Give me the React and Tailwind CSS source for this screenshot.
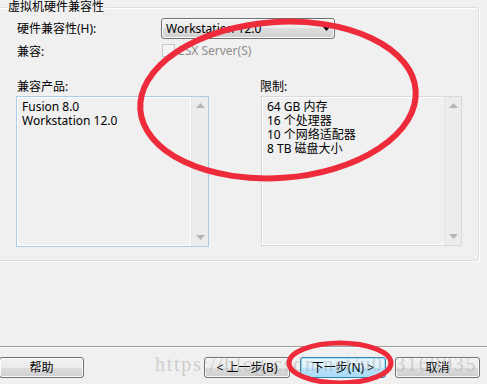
import React from "react";

const font = { fontFamily: '"Noto Sans", "Noto Sans CJK SC", sans-serif' };

function ScrollBar() {
  return (
    <div className="w-[17px] h-full border-l border-[#e6e6e6] bg-[#ececec] flex flex-col items-center justify-between py-[6px]">
      <svg width="9" height="5" viewBox="0 0 9 5"><path d="M4.5 0 L9 5 L0 5 Z" fill="#b5b5b5" /></svg>
      <svg width="9" height="5" viewBox="0 0 9 5"><path d="M0 0 L9 0 L4.5 5 Z" fill="#b5b5b5" /></svg>
    </div>
  );
}

function Btn({ children, primary, className = "" }) {
  return (
    <div
      className={
        "h-[21px] rounded-[3px] border flex items-center justify-center text-[12px] text-black " +
        (primary
          ? "border-[#3c7fb1] bg-[linear-gradient(#eaf6fd_0%,#d9f0fc_50%,#bee6fd_50%,#a7d9f5_100%)] shadow-[inset_0_0_0_1px_#9ee4fb] "
          : "border-[#707070] bg-[linear-gradient(#f2f2f2_0%,#ebebeb_50%,#dddddd_50%,#cfcfcf_100%)] shadow-[inset_0_0_0_1px_#fcfcfc] ") +
        className
      }
    >
      {children}
    </div>
  );
}

export default function App() {
  return (
    <div className="relative w-[487px] h-[384px] bg-[#f0f0f0] overflow-hidden text-[12px] leading-[16px] text-black" style={font}>
      {/* group box */}
      <div className="relative mt-[7px] ml-[-2px] w-[481px] h-[254px] border border-[#d5dfe5] rounded-[2px] shadow-[inset_1px_1px_0_#ffffff,1px_1px_0_#ffffff]">
        <div className="absolute top-[-9px] left-[8px] bg-[#f0f0f0] px-[1px] leading-[16px]">虚拟机硬件兼容性</div>
        <div className="pl-[18px] pt-[10px]">
          <div className="flex items-center h-[21px]">
            <div className="w-[144px]">硬件兼容性(H):</div>
            <div className="w-[174px] h-[21px] rounded-[3px] border border-[#707070] bg-[linear-gradient(#f2f2f2_0%,#ebebeb_50%,#dddddd_50%,#cfcfcf_100%)] shadow-[inset_0_0_0_1px_#fcfcfc] flex items-center justify-between pl-[4px] pr-[4px]">
              <span>Workstation 12.0</span>
              <svg width="7" height="4" viewBox="0 0 7 4"><path d="M0 0 L7 0 L3.5 4 Z" fill="#000" /></svg>
            </div>
          </div>
          <div className="flex items-center h-[13px] mt-[5px]">
            <div className="w-[145px] mt-[3px]">兼容:</div>
            <div className="w-[13px] h-[13px] border border-[#c8c8c8] bg-[#f4f4f4]"></div>
            <div className="ml-[3px] text-[#8d8d8d]">ESX Server(S)</div>
          </div>
          <div className="flex mt-[22px]">
            <div className="w-[243px]">兼容产品:</div>
            <div>限制:</div>
          </div>
          <div className="flex mt-[1px] ml-[-1px]">
            <div className="w-[193px] h-[151px] border border-[#a9cde8] flex">
              <div className="flex-1 pl-[5px] pt-[3px] leading-[14px] shadow-[inset_0_0_0_1px_#ffffff]">
                <div>Fusion 8.0</div>
                <div>Workstation 12.0</div>
              </div>
              <ScrollBar />
            </div>
            <div className="w-[201px] h-[150px] ml-[52px] border border-[#d9d9d9] flex shadow-[inset_0_0_0_1px_#ffffff]">
              <div className="flex-1 pl-[5px] pt-[3px] leading-[14px]">
                <div>64 GB 内存</div>
                <div>16 个处理器</div>
                <div>10 个网络适配器</div>
                <div>8 TB 磁盘大小</div>
              </div>
              <ScrollBar />
            </div>
          </div>
        </div>
      </div>

      {/* separator */}
      <div className="mt-[85px] h-[1px] bg-[#a0a0a0]"></div>
      <div className="h-[1px] bg-[#ffffff]"></div>

      {/* buttons */}
      <div className="flex mt-[9px]">
        <Btn className="w-[85px] ml-[-1px]">帮助</Btn>
        <Btn className="w-[86px] ml-[120px]">&lt; 上一步(B)</Btn>
        <Btn primary className="w-[86px] ml-[10px]">下一步(N) &gt;</Btn>
        <Btn className="w-[85px] ml-[9px]">取消</Btn>
      </div>

      {/* watermark */}
      <div
        className="absolute left-[155px] top-[352px] text-[20px] leading-[24px] text-[rgba(150,150,150,0.4)] pointer-events-none whitespace-nowrap tracking-[1.7px]"
        style={{ fontFamily: '"Liberation Serif", serif' }}
      >
        https://blog.csdn.net/u013169035
      </div>

      {/* red annotations */}
      <svg className="absolute left-0 top-0 pointer-events-none" width="487" height="384" viewBox="0 0 487 384">
        <ellipse cx="278" cy="100" rx="138" ry="78" transform="rotate(-4 278 100)" fill="none" stroke="#ee2b3b" strokeWidth="6" />
        <ellipse cx="340" cy="363" rx="51" ry="20" fill="none" stroke="#ee2b3b" strokeWidth="5" />
      </svg>
    </div>
  );
}
